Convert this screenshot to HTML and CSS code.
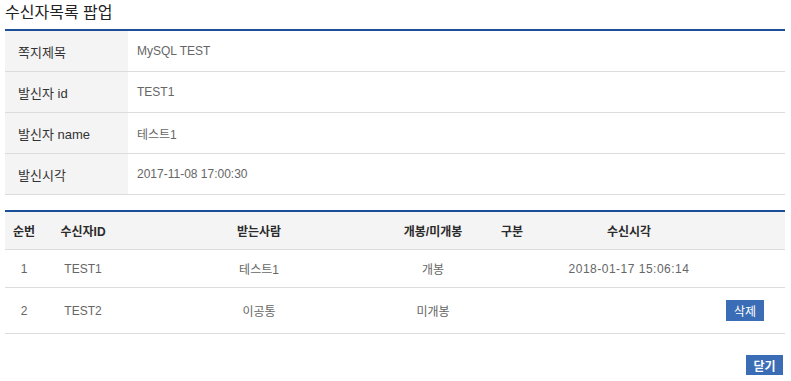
FILE: index.html
```html
<!DOCTYPE html>
<html lang="ko">
<head>
    <meta charset="UTF-8">
    <title>수신자목록 팝업</title>
    <link rel="stylesheet" href="styles.css">
</head>
<body>
    <div class="popup">
        <h2 class="popup-title">수신자목록 팝업</h2>

        <!-- 쪽지 정보 -->
        <table class="info-table">
            <tr>
                <th>쪽지제목</th>
                <td>MySQL TEST</td>
            </tr>
            <tr>
                <th>발신자 id</th>
                <td>TEST1</td>
            </tr>
            <tr>
                <th>발신자 name</th>
                <td>테스트1</td>
            </tr>
            <tr>
                <th>발신시각</th>
                <td>2017-11-08 17:00:30</td>
            </tr>
        </table>

        <!-- 수신자 목록 -->
        <table class="list-table">
            <colgroup>
                <col style="width: 38px">
                <col style="width: 80px">
                <col style="width: 272px">
                <col style="width: 76px">
                <col style="width: 82px">
                <col style="width: 152px">
                <col style="width: 80px">
            </colgroup>
            <thead>
                <tr>
                    <th>순번</th>
                    <th>수신자ID</th>
                    <th>받는사람</th>
                    <th>개봉/미개봉</th>
                    <th>구분</th>
                    <th>수신시각</th>
                    <th></th>
                </tr>
            </thead>
            <tbody>
                <tr>
                    <td>1</td>
                    <td>TEST1</td>
                    <td>테스트1</td>
                    <td>개봉</td>
                    <td></td>
                    <td class="date">2018-01-17 15:06:14</td>
                    <td></td>
                </tr>
                <tr>
                    <td>2</td>
                    <td>TEST2</td>
                    <td>이공통</td>
                    <td>미개봉</td>
                    <td></td>
                    <td></td>
                    <td><button class="btn btn-del">삭제</button></td>
                </tr>
            </tbody>
        </table>

        <div class="btn-area">
            <button class="btn btn-close">닫기</button>
        </div>
    </div>
</body>
</html>
```

FILE: styles.css
```css
body {
    margin: 0;
    padding: 0 6px 0 5px;
    background: #fff;
    font-family: "Liberation Sans", "Noto Sans CJK KR", sans-serif;
    font-size: 12px;
    color: #555;
}
.popup { width: 780px; }
.popup-title {
    margin: 0;
    height: 29px;
    line-height: 26px;
    font-size: 16px;
    font-weight: normal;
    color: #222;
}
table {
    width: 780px;
    border-collapse: collapse;
    table-layout: fixed;
    border-top: 2px solid #1d4f98;
}

/* 쪽지 정보 */
.info-table th,
.info-table td {
    height: 40px;
    padding: 0;
    border-bottom: 1px solid #dcdcdc;
    text-align: left;
    font-weight: normal;
}
.info-table th {
    width: 110px;
    padding-left: 13px;
    background-color: #f4f4f4;
    color: #333;
    font-size: 13px;
}
.info-table td {
    padding-left: 9px;
    color: #666;
}

/* 수신자 목록 */
.list-table { margin-top: 15px; }
.list-table th,
.list-table td {
    height: 37px;
    padding: 0;
    border-bottom: 1px solid #dcdcdc;
    text-align: center;
}
.list-table th {
    background-color: #f4f4f4;
    color: #2b2b2b;
    font-weight: bold;
    font-size: 12px;
}
.list-table td { color: #666; }
.list-table td.date { letter-spacing: 0.5px; }
.list-table tbody tr:last-child td { height: 45px; }

.btn {
    border: none;
    border-radius: 0;
    background-color: #3a6db5;
    color: #fff;
    font-family: inherit;
    font-size: 12px;
    cursor: pointer;
    padding: 0;
}
.btn-del { width: 38px; height: 21px; }
.btn-area {
    margin-top: 21px;
    text-align: right;
}
.btn-close {
    width: 37px;
    height: 20px;
    margin-right: 2px;
    font-weight: bold;
}
```
